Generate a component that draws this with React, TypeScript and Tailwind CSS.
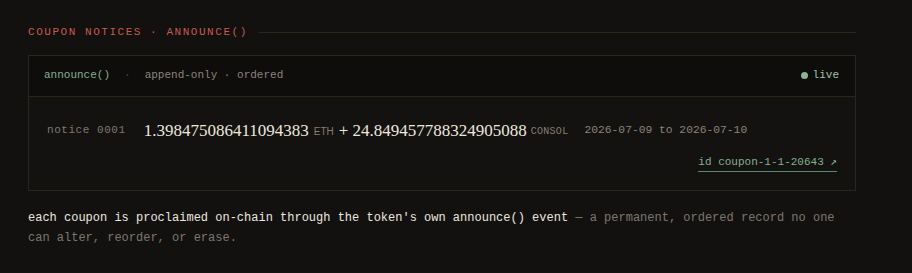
const mono = "font-['Liberation_Mono','DejaVu_Sans_Mono',monospace]";

function SectionHeader() {
  return (
    <div className="flex items-center gap-[11px]">
      <span className={`${mono} text-[11px] uppercase tracking-[0.14em] text-[#c95a4d]`}>
        coupon notices · announce()
      </span>
      <div className="h-px flex-1 bg-[#29251f]" />
    </div>
  );
}

function NoticeRow() {
  return (
    <div className="px-[18px] pt-[22px] pb-[18px]">
      <div className="flex h-6 items-center">
        <span className={`${mono} text-[11px] tracking-[0.05em] text-[#7f7970]`}>notice 0001</span>
        <span className="ml-[18px] font-['Liberation_Serif',serif] text-[17px] text-[#ece7dd]">
          1.398475086411094383
        </span>
        <span className="ml-[5px] mt-[2px] font-['Liberation_Sans',sans-serif] text-[10px] text-[#857f75]">ETH</span>
        <span className="ml-[5px] font-['Liberation_Serif',serif] text-[17px] text-[#ece7dd]">+</span>
        <span className="ml-[4px] font-['Liberation_Serif',serif] text-[17px] text-[#ece7dd]">
          24.849457788324905088
        </span>
        <span className={`${mono} ml-[4px] mt-[2px] text-[10px] tracking-[0.03em] text-[#857f75]`}>CONSOL</span>
        <span className={`${mono} ml-[16px] text-[11.3px] text-[#8a847a]`}>2026-07-09 to 2026-07-10</span>
      </div>
      <div className="mt-[11px] flex justify-end">
        <span className={`${mono} border-b border-[#5f8a6a] pb-[1px] text-[11px] leading-4 text-[#82b08f]`}>
          id coupon-1-1-20643 ↗
        </span>
      </div>
    </div>
  );
}

export default function App() {
  return (
    <main className="min-h-screen bg-[#121110] pt-[24px] pl-[28px]">
      <div className="w-[828px]">
        <SectionHeader />

        <div className="mt-[14px] border border-[#29251f] bg-[#141210]">
          <div className="flex h-[41px] items-center justify-between border-b border-[#29251f] bg-[#0e0d0c] pl-[15px] pr-[16px]">
            <div className={`${mono} flex items-center text-[11px] text-[#8a847a]`}>
              <span className="text-[#82b08f]">announce()</span>
              <span className="mx-[14px] text-[#4a463f]">·</span>
              <span>append-only · ordered</span>
            </div>
            <div className={`${mono} flex items-center gap-[5px] text-[11px] text-[#9cc4a4]`}>
              <span className="h-[7px] w-[7px] rounded-full bg-[#86b592]" />
              <span>live</span>
            </div>
          </div>
          <NoticeRow />
        </div>

        <p className={`${mono} mt-[17px] text-[12px] leading-5 text-[#7d776e]`}>
          <span className="text-[#ebe7df]">
            each coupon is proclaimed on-chain through the token's own announce() event
          </span>{" "}
          <span>— a permanent, ordered record no one</span>
          <br />
          <span>can alter, reorder, or erase.</span>
        </p>
      </div>
    </main>
  );
}
